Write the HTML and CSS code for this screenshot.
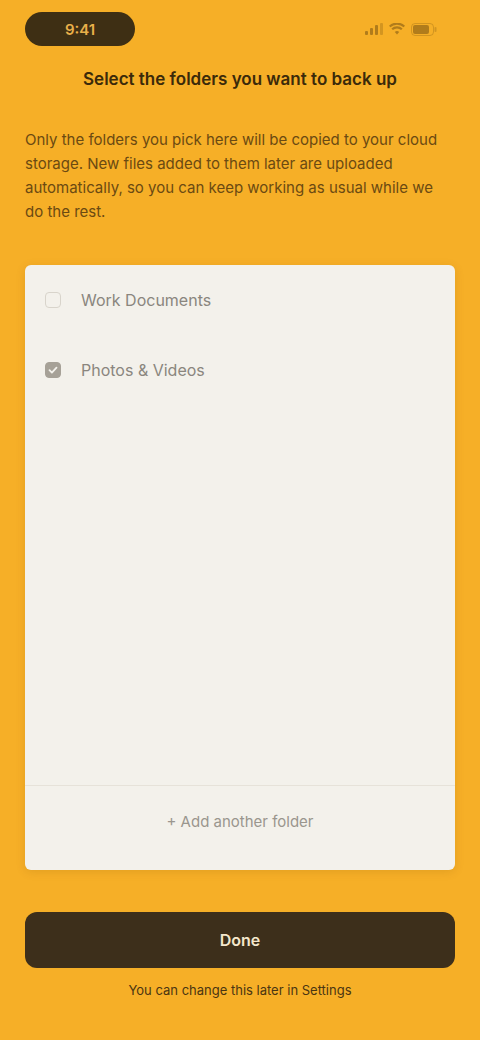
FILE: index.html
```html
<!DOCTYPE html>
<html lang="en">
<head>
    <meta charset="UTF-8">
    <meta name="viewport" content="width=device-width, initial-scale=1.0">
    <title>Back up folders</title>
    <link rel="stylesheet" href="styles.css">
</head>
<body>
    <div class="screen">
        <div class="status">
            <span class="time-pill">9:41</span>
            <span class="status-icons">
                <svg width="18" height="12" viewBox="0 0 18 12"><rect x="0" y="8" width="3" height="4" rx="1"/><rect x="5" y="5" width="3" height="7" rx="1"/><rect x="10" y="2" width="3" height="10" rx="1"/><rect x="15" y="0" width="3" height="12" rx="1" opacity="0.5"/></svg>
                <svg width="16" height="12" viewBox="0 0 16 12"><path d="M8 11.5l2.2-2.6a3.3 3.3 0 0 0-4.4 0z"/><path d="M2.4 5.4a8.2 8.2 0 0 1 11.2 0l-1.5 1.7a6 6 0 0 0-8.2 0z"/><path d="M0 2.7a11.8 11.8 0 0 1 16 0l-1.4 1.6a9.7 9.7 0 0 0-13.2 0z"/></svg>
                <svg class="battery" width="26" height="13" viewBox="0 0 26 13"><rect x="0.5" y="0.5" width="22" height="12" rx="3.5" fill="none" stroke="currentColor" opacity="0.5"/><rect x="2" y="2" width="16" height="9" rx="2"/><rect x="23.5" y="4" width="2" height="5" rx="1" opacity="0.5"/></svg>
            </span>
        </div>

        <h1 class="title">Select the folders you want to back up</h1>
        <p class="intro">Only the folders you pick here will be copied to your cloud storage. New files added to them later are uploaded automatically, so you can keep working as usual while we do the rest.</p>

        <!-- Folder list -->
        <div class="card">
            <div class="row">
                <span class="check"></span>
                <span class="label">Work Documents</span>
            </div>
            <div class="row">
                <span class="check checked">
                    <svg width="12" height="12" viewBox="0 0 12 12"><path d="M2.5 6.2l2.4 2.4 4.6-5" fill="none" stroke="#f3f1eb" stroke-width="1.8" stroke-linecap="round" stroke-linejoin="round"/></svg>
                </span>
                <span class="label">Photos &amp; Videos</span>
            </div>
            <div class="card-footer">+ Add another folder</div>
        </div>

        <button type="button" class="done">Done</button>
        <a href="#" class="hint">You can change this later in Settings</a>
    </div>
</body>
</html>
```

FILE: styles.css
```css
/* Backup picker screen */
body {
    margin: 0;
    font-family: Inter, 'Noto Sans', sans-serif;
    background-color: #f6af27;
    color: #3b2a0a;
}
.screen {
    display: flex;
    flex-direction: column;
    height: 1040px;
    padding: 0 25px 40px;
    box-sizing: border-box;
}
.status {
    height: 58px;
    display: flex;
    align-items: center;
    justify-content: space-between;
}
.time-pill {
    width: 110px;
    height: 34px;
    border-radius: 17px;
    background-color: #3e2f14;
    color: #e9b04a;
    font-size: 15px;
    font-weight: 600;
    display: flex;
    align-items: center;
    justify-content: center;
}
.status-icons {
    display: flex;
    align-items: center;
    gap: 6px;
    padding-right: 18px;
    color: #7a5412;
    fill: #7a5412;
    opacity: 0.55;
}
.title {
    margin: 10px 0 0;
    padding: 0 40px;
    font-size: 17px;
    line-height: 22px;
    font-weight: 600;
    text-align: center;
}
.intro {
    margin: 38px 0 0;
    padding-right: 6px;
    font-size: 15px;
    line-height: 24px;
    color: #6b4a12;
}
.card {
    flex: 1;
    margin-top: 41px;
    background-color: #f3f1eb;
    border-radius: 6px;
    box-shadow: 0 2px 10px rgba(120, 70, 0, 0.15);
    display: flex;
    flex-direction: column;
}
.row {
    height: 70px;
    display: flex;
    align-items: center;
    gap: 20px;
    padding: 0 20px;
}
.check {
    width: 16px;
    height: 16px;
    border-radius: 4px;
    border: 1.5px solid #d8d4cb;
    box-sizing: border-box;
    display: flex;
    align-items: center;
    justify-content: center;
}
.check.checked {
    background-color: #a6a197;
    border-color: #a6a197;
}
.label {
    font-size: 16px;
    color: #8a867e;
}
.card-footer {
    margin-top: auto;
    border-top: 1px solid #e6e2d9;
    padding: 26px 0 38px;
    text-align: center;
    font-size: 15px;
    line-height: 20px;
    color: #9a968e;
}
.done {
    margin-top: 42px;
    height: 56px;
    border: none;
    border-radius: 12px;
    background-color: #3d2f1b;
    color: #f4e7cc;
    font-family: inherit;
    font-size: 16px;
    font-weight: 600;
    cursor: pointer;
}
.hint {
    margin-top: 12px;
    font-size: 13px;
    line-height: 20px;
    text-align: center;
    color: #4a3512;
    text-decoration: none;
}
```
